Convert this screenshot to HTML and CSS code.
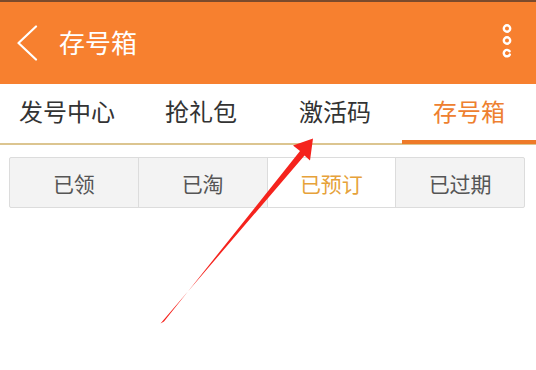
FILE: index.html
```html
<!DOCTYPE html>
<html lang="zh-CN">
<head>
<meta charset="utf-8">
<title>存号箱</title>
<link rel="stylesheet" href="styles.css">
</head>
<body>
<div class="page">
  <div class="status-strip"></div>
  <header class="appbar">
    <svg class="back" width="24" height="36" viewBox="0 0 24 36" aria-hidden="true">
      <polyline points="20,1.5 2.5,18 20,34.5" fill="none" stroke="#fff" stroke-width="2.2" stroke-linecap="round" stroke-linejoin="round"/>
    </svg>
    <h1 class="title">存号箱</h1>
    <svg class="more" width="14" height="36" viewBox="0 0 14 36" aria-hidden="true">
      <circle cx="7" cy="4.5" r="3.2" fill="none" stroke="#fff" stroke-width="2.4"/>
      <circle cx="7" cy="16.5" r="3.2" fill="none" stroke="#fff" stroke-width="2.4"/>
      <path d="M9.6 27.3 A3.2 3.2 0 1 0 9.8 30.6" fill="none" stroke="#fff" stroke-width="2.4" stroke-linecap="round"/>
    </svg>
  </header>
  <nav class="tabs">
    <div class="tab">发号中心</div>
    <div class="tab">抢礼包</div>
    <div class="tab">激活码</div>
    <div class="tab active">存号箱</div>
  </nav>
  <div class="segments">
    <div class="seg">已领</div>
    <div class="seg">已淘</div>
    <div class="seg selected">已预订</div>
    <div class="seg">已过期</div>
  </div>
  <svg class="arrow" width="536" height="370" viewBox="0 0 536 370" aria-hidden="true">
    <polygon points="160.5,323.5 164,321.5 300,151 293,145.5 313,138.5 310,160.5 304.5,155.5" fill="#f5231d"/>
  </svg>
</div>
</body>
</html>
```
FILE: styles.css
```css
* { box-sizing: border-box; margin: 0; padding: 0; }
html, body { width: 536px; height: 370px; overflow: hidden; background: #fff; }
body { font-family: "Noto Sans CJK SC", "Noto Sans", sans-serif; }
.page { position: relative; width: 536px; height: 370px; background: #fff; }
.status-strip { height: 2px; background: #7b4a2c; }
.appbar {
  height: 82px;
  background: #f7802f;
  display: flex;
  align-items: center;
  padding: 0 22px 0 16px;
}
.back { display: block; }
.title {
  font-size: 26px;
  font-weight: 400;
  color: #fff;
  margin-left: 19px;
  flex: 1;
  line-height: 1;
  margin-top: -2px;
}
.more { display: block; margin-top: -2px; }
.tabs {
  display: flex;
  height: 61px;
  border-bottom: 2px solid #dcc590;
  background: #fff;
}
.tab {
  flex: 1;
  display: flex;
  align-items: center;
  justify-content: center;
  font-size: 24px;
  color: #333;
  padding-bottom: 3px;
  border-bottom: 4px solid transparent;
  margin-bottom: -1px;
}
.tab.active { color: #ee8030; border-bottom-color: #ee7a28; }
.segments {
  display: flex;
  margin: 12px 11px 0 9px;
  height: 51px;
  border: 1px solid #dcdcdc;
  border-radius: 2px;
  background: #f3f3f3;
}
.seg {
  flex: 1;
  display: flex;
  align-items: center;
  justify-content: center;
  font-size: 21px;
  color: #555;
  border-left: 1px solid #dcdcdc;
}
.seg:first-child { border-left: none; }
.seg.selected { background: #fff; color: #e6a23a; }
.arrow { position: absolute; left: 0; top: 0; pointer-events: none; }
```
